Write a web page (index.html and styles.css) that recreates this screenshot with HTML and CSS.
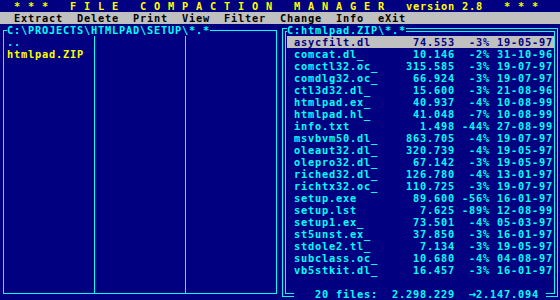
FILE: index.html
```html
<!DOCTYPE html>
<html>
<head>
<meta charset="utf-8">
<link rel="stylesheet" href="styles.css">
</head>
<body>
<div class="screen">
  <div class="titlebar">  * * *   F I L E   C O M P A C T I O N   M A N A G E R   version 2.8   * * *</div>
  <div class="menubar">  Extract  Delete  Print  View  Filter  Change  Info  eXit</div>
  <div class="panels">
    <section class="panel panel-left">
      <div class="box">
        <div class="box-title">C:\PROJECTS\HTMLPAD\SETUP\*.*</div>
        <div class="cols">
          <div class="col">
            <div class="entry up">..</div>
            <div class="entry archive">htmlpad.ZIP</div>
          </div>
          <div class="col"></div>
          <div class="col"></div>
        </div>
      </div>
    </section>
    <section class="panel panel-right">
      <div class="dbl-outer">
        <div class="dbl-inner">
          <div class="box-title right-title">C:htmlpad.ZIP\*.*</div>
          <div class="files">
            <div class="row selected"><span>asycfilt.dl_</span><span class="num">74.553</span><span class="num">-3%</span><span></span><span>19-05-97</span></div>
            <div class="row"><span>comcat.dl_</span><span class="num">10.146</span><span class="num">-2%</span><span></span><span>31-10-96</span></div>
            <div class="row"><span>comctl32.oc_</span><span class="num">315.585</span><span class="num">-3%</span><span></span><span>19-07-97</span></div>
            <div class="row"><span>comdlg32.oc_</span><span class="num">66.924</span><span class="num">-3%</span><span></span><span>19-07-97</span></div>
            <div class="row"><span>ctl3d32.dl_</span><span class="num">15.600</span><span class="num">-3%</span><span></span><span>21-08-96</span></div>
            <div class="row"><span>htmlpad.ex_</span><span class="num">40.937</span><span class="num">-4%</span><span></span><span>10-08-99</span></div>
            <div class="row"><span>htmlpad.hl_</span><span class="num">41.048</span><span class="num">-7%</span><span></span><span>10-08-99</span></div>
            <div class="row"><span>info.txt</span><span class="num">1.498</span><span class="num">-44%</span><span></span><span>27-08-99</span></div>
            <div class="row"><span>msvbvm50.dl_</span><span class="num">863.705</span><span class="num">-4%</span><span></span><span>19-07-97</span></div>
            <div class="row"><span>oleaut32.dl_</span><span class="num">320.739</span><span class="num">-4%</span><span></span><span>19-05-97</span></div>
            <div class="row"><span>olepro32.dl_</span><span class="num">67.142</span><span class="num">-3%</span><span></span><span>19-05-97</span></div>
            <div class="row"><span>riched32.dl_</span><span class="num">126.780</span><span class="num">-4%</span><span></span><span>13-01-97</span></div>
            <div class="row"><span>richtx32.oc_</span><span class="num">110.725</span><span class="num">-3%</span><span></span><span>19-07-97</span></div>
            <div class="row"><span>setup.exe</span><span class="num">89.600</span><span class="num">-56%</span><span></span><span>16-01-97</span></div>
            <div class="row"><span>setup.lst</span><span class="num">7.625</span><span class="num">-89%</span><span></span><span>12-08-99</span></div>
            <div class="row"><span>setup1.ex_</span><span class="num">73.501</span><span class="num">-4%</span><span></span><span>05-03-97</span></div>
            <div class="row"><span>st5unst.ex_</span><span class="num">37.850</span><span class="num">-3%</span><span></span><span>16-01-97</span></div>
            <div class="row"><span>stdole2.tl_</span><span class="num">7.134</span><span class="num">-3%</span><span></span><span>19-05-97</span></div>
            <div class="row"><span>subclass.oc_</span><span class="num">10.680</span><span class="num">-4%</span><span></span><span>04-08-97</span></div>
            <div class="row"><span>vb5stkit.dl_</span><span class="num">16.457</span><span class="num">-3%</span><span></span><span>16-01-97</span></div>
          </div>
          <div class="summary">   20 files:  2.298.229 <span class="arrow">→</span>2.147.094 </div>
        </div>
      </div>
    </section>
  </div>
</div>
</body>
</html>
```
FILE: styles.css
```css
html, body {
  margin: 0;
  padding: 0;
  background: #000080;
}

.screen {
  width: 560px;
  height: 300px;
  overflow: hidden;
  display: flex;
  flex-direction: column;
  font-family: "DejaVu Sans Mono", "Liberation Mono", monospace;
  font-weight: bold;
  font-size: 10.3px;
  letter-spacing: 0.8px;
  line-height: 12px;
  color: #00ffff;
}

.titlebar {
  height: 12px;
  color: #ffff00;
  white-space: pre;
}

.menubar {
  height: 12px;
  background: #c0c0c0;
  color: #000000;
  white-space: pre;
}

.panels {
  display: flex;
  height: 276px;
}

.panel {
  width: 280px;
  height: 276px;
  box-sizing: border-box;
}

.panel-left {
  padding: 6px 3px 6px 3px;
}

.box {
  height: 100%;
  box-sizing: border-box;
  border: 1px solid #00ffff;
  display: flex;
  flex-direction: column;
}

.box-title {
  align-self: flex-start;
  height: 12px;
  margin-top: -7px;
  margin-left: 3px;
  background: #000080;
  color: #00ffff;
  white-space: pre;
}

.cols {
  flex: 1;
  display: grid;
  grid-template-columns: 90px 91px 91px;
}

.col + .col {
  border-left: 1px solid #00ffff;
}

.entry {
  height: 12px;
  padding-left: 3px;
  white-space: pre;
}

.entry.up {
  color: #00ffff;
}

.entry.archive {
  color: #ffff00;
}

.panel-right {
  padding: 4px 2px 3px 2px;
}

.dbl-outer {
  height: 100%;
  box-sizing: border-box;
  border: 1px solid #00ffff;
  padding: 2px;
}

.dbl-inner {
  height: 100%;
  box-sizing: border-box;
  border: 1px solid #00ffff;
  display: flex;
  flex-direction: column;
}

.right-title {
  margin-top: -8px;
  margin-left: 1px;
}

.files {
  margin-left: 1px;
  width: 267px;
}

.row {
  height: 12px;
  display: grid;
  grid-template-columns: 84px 77px 35px 7px 56px;
  padding-left: 7px;
  white-space: pre;
  color: #00ffff;
}

.row.selected {
  background: #c0c0c0;
  color: #000080;
}

.num {
  text-align: right;
}

.summary {
  margin-top: auto;
  margin-bottom: -7px;
  margin-left: 8px;
  width: 252px;
  height: 12px;
  background: #000080;
  color: #00ffff;
  white-space: pre;
}

.arrow {
  display: inline-block;
  width: 14px;
  text-align: right;
  letter-spacing: 0;
  font-size: 12px;
}
```
